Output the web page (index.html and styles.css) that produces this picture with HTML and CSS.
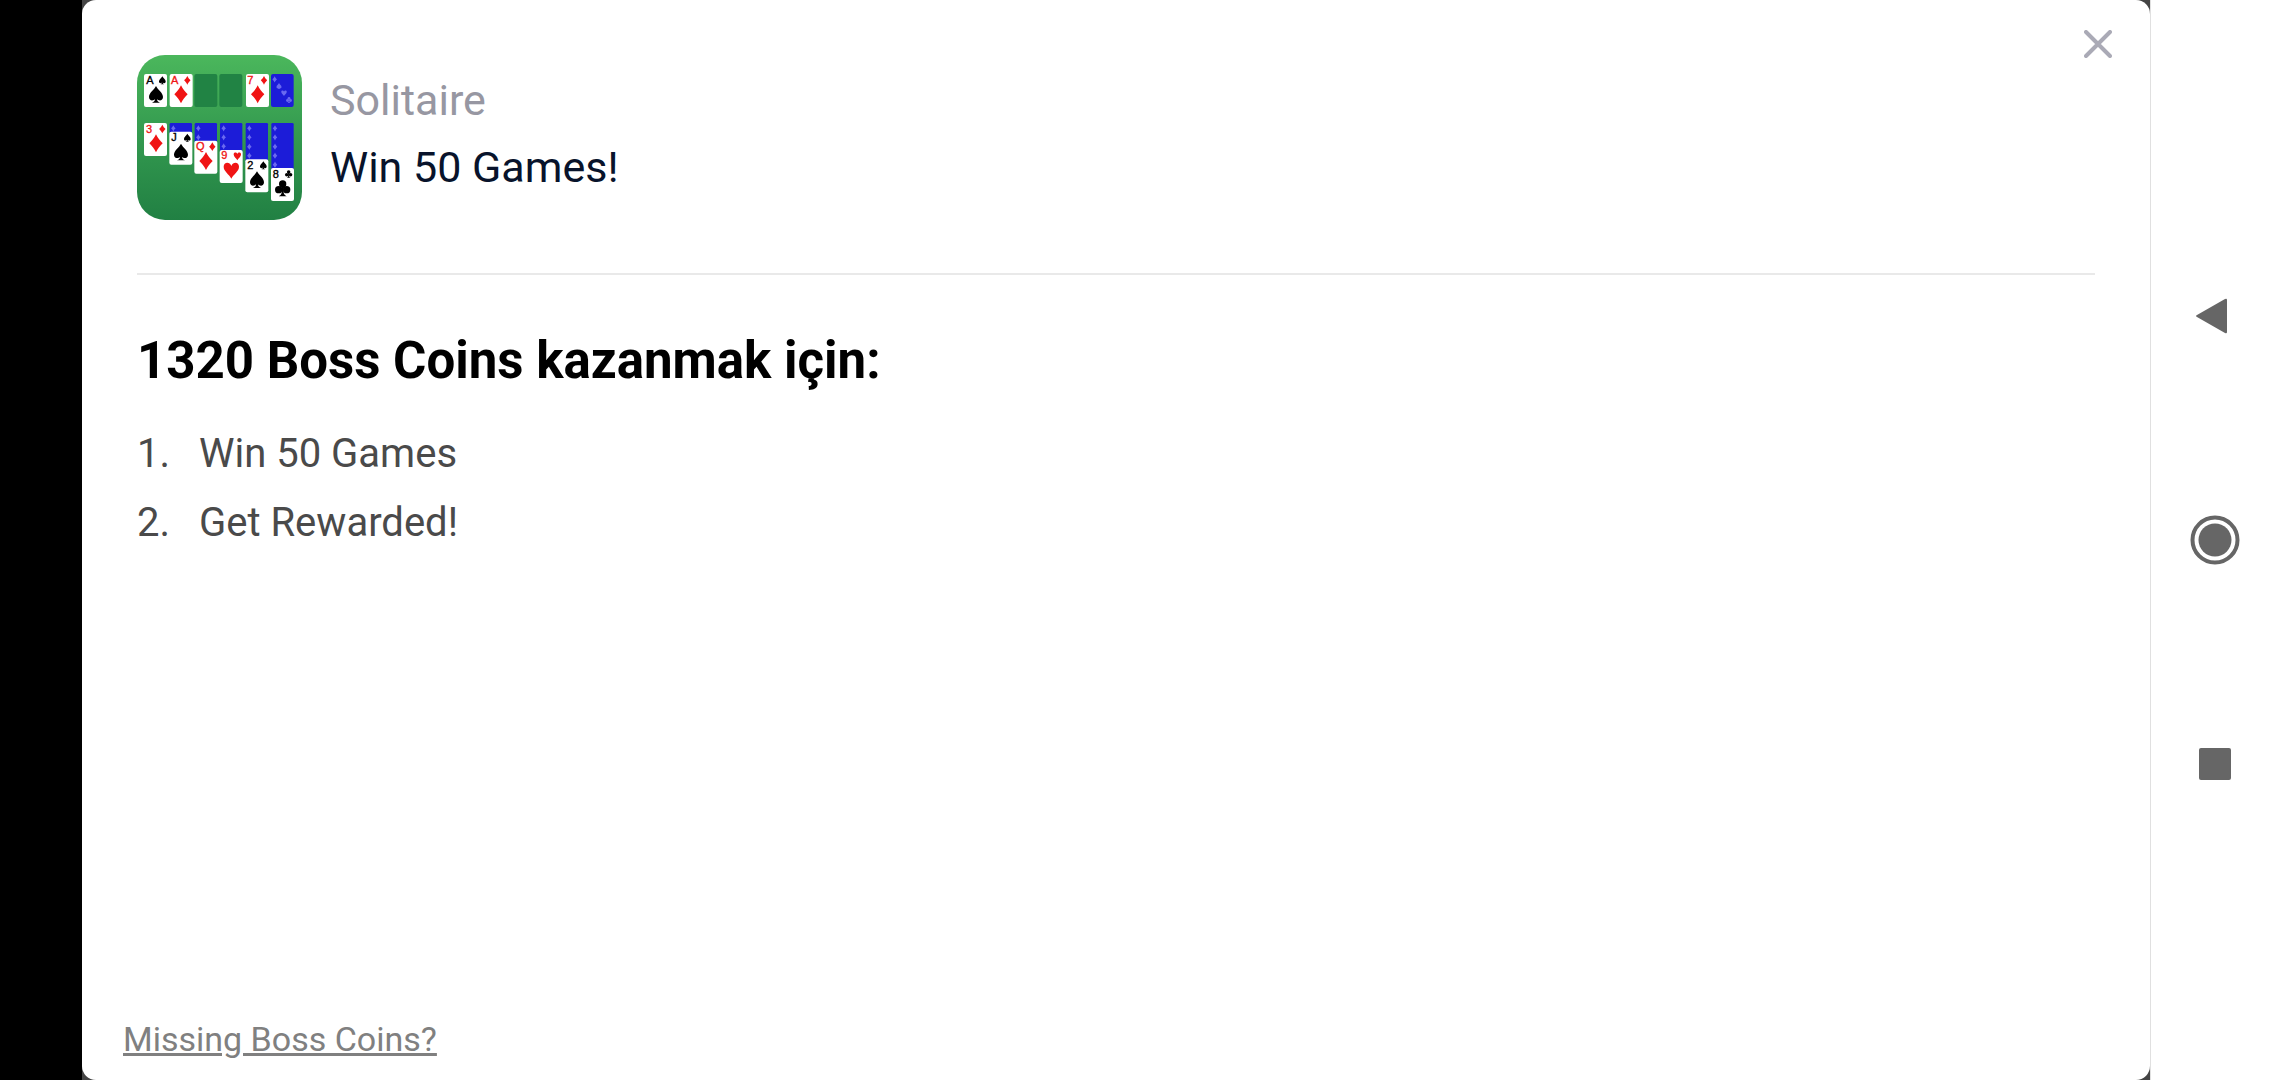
FILE: index.html
```
<!DOCTYPE html>
<html lang="tr">
<head>
    <meta charset="UTF-8">
    <meta name="viewport" content="width=device-width, initial-scale=1.0">
    <title>Solitaire - Win 50 Games!</title>
    <link rel="stylesheet" href="styles.css">
</head>
<body>
    <div class="stage">
        <main class="offer-card">
            <header class="offer-header">
                <svg class="app-icon" viewBox="22 22 495 495" role="img" aria-label="Solitaire">
                    <defs>
                        <linearGradient id="felt" x1="0" y1="0" x2="0" y2="1">
                            <stop offset="0" stop-color="#4bb75c"/>
                            <stop offset="0.5" stop-color="#33994f"/>
                            <stop offset="1" stop-color="#218043"/>
                        </linearGradient>
                        <path id="diamond" d="M0-27C6-15 12-8 20 0C12 8 6 15 0 27C-6 15-12 8-20 0C-12-8-6-15 0-27Z"/>
                        <path id="spade" d="M0-25C5-14 21-5 21 8C21 20 8 21 3 14C3 20 6 23 12 25H-12C-6 23-3 20-3 14C-8 21-21 20-21 8C-21-5-5-14 0-25Z"/>
                        <path id="heart" d="M0 26C-7 12-23 4-23-10C-23-24-5-26 0-12C5-26 23-24 23-10C23 4 7 12 0 26Z"/>
                        <g id="club">
                            <circle cy="-13" r="11"/>
                            <circle cx="-12" cy="4" r="11"/>
                            <circle cx="12" cy="4" r="11"/>
                            <path d="M-4-6H4L3 14Q5 21 12 24H-12Q-5 21-3 14Z"/>
                        </g>
                        <rect id="face" width="69" height="99" rx="6" fill="#fff"/>
                    </defs>
                    <rect x="22" y="22" width="495" height="495" fill="url(#felt)"/>

                    <!-- foundations, waste and stock -->
                    <use href="#face" x="43" y="79"/>
                    <text x="50" y="108">A</text>
                    <use href="#spade" transform="translate(98 98) scale(.48)"/>
                    <use href="#spade" transform="translate(79 140)"/>
                    <use href="#face" x="120" y="79"/>
                    <g class="red">
                        <text x="124" y="108">A</text>
                        <use href="#diamond" transform="translate(173 98) scale(.48)"/>
                        <use href="#diamond" transform="translate(154 140)"/>
                    </g>
                    <rect x="194" y="79" width="69" height="99" rx="6" fill="#218344"/>
                    <rect x="269" y="79" width="69" height="99" rx="6" fill="#218344"/>
                    <use href="#face" x="349" y="79"/>
                    <g class="red">
                        <text x="353" y="108">7</text>
                        <use href="#diamond" transform="translate(403 98) scale(.48)"/>
                        <use href="#diamond" transform="translate(384 140)"/>
                    </g>
                    <rect class="back" x="424" y="79" width="68" height="99" rx="6"/>
                    <g class="pips">
                        <use href="#diamond" transform="translate(435 95) scale(.35)"/>
                        <use href="#spade" transform="translate(448 115) scale(.36)"/>
                        <use href="#heart" transform="translate(463 136) scale(.36)"/>
                        <use href="#club" transform="translate(478 157) scale(.38)"/>
                    </g>

                    <!-- face-down stacks -->
                    <g class="back">
                        <rect x="120" y="226" width="67" height="40" rx="4"/>
                        <rect x="195" y="226" width="67" height="70" rx="4"/>
                        <rect x="271" y="226" width="67" height="100" rx="4"/>
                        <rect x="348" y="226" width="67" height="125" rx="4"/>
                        <rect x="425" y="226" width="67" height="150" rx="4"/>
                    </g>
                    <g class="pips">
                        <use href="#diamond" transform="translate(131 242) scale(.34)"/>
                        <use href="#diamond" transform="translate(206 242) scale(.34)"/>
                        <use href="#diamond" transform="translate(206 269) scale(.34)"/>
                        <use href="#diamond" transform="translate(282 242) scale(.34)"/>
                        <use href="#diamond" transform="translate(282 269) scale(.34)"/>
                        <use href="#diamond" transform="translate(282 296) scale(.34)"/>
                        <use href="#diamond" transform="translate(359 242) scale(.34)"/>
                        <use href="#diamond" transform="translate(359 269) scale(.34)"/>
                        <use href="#diamond" transform="translate(359 297) scale(.34)"/>
                        <use href="#diamond" transform="translate(359 324) scale(.34)"/>
                        <use href="#diamond" transform="translate(436 242) scale(.34)"/>
                        <use href="#diamond" transform="translate(436 269) scale(.34)"/>
                        <use href="#diamond" transform="translate(436 297) scale(.34)"/>
                        <use href="#diamond" transform="translate(436 324) scale(.34)"/>
                        <use href="#diamond" transform="translate(436 351) scale(.34)"/>
                    </g>

                    <!-- top card of each column -->
                    <use href="#face" x="43" y="226"/>
                    <g class="red">
                        <text x="49" y="255">3</text>
                        <use href="#diamond" transform="translate(98 244) scale(.48)"/>
                        <use href="#diamond" transform="translate(79 287)"/>
                    </g>
                    <use href="#face" x="119" y="252"/>
                    <text x="125" y="281">J</text>
                    <use href="#spade" transform="translate(173 270) scale(.48)"/>
                    <use href="#spade" transform="translate(154 313)"/>
                    <use href="#face" x="194" y="279"/>
                    <g class="red">
                        <text x="199" y="307">Q</text>
                        <use href="#diamond" transform="translate(248 297) scale(.48)"/>
                        <use href="#diamond" transform="translate(229 340)"/>
                    </g>
                    <use href="#face" x="270" y="307"/>
                    <g class="red">
                        <text x="275" y="335">9</text>
                        <use href="#heart" transform="translate(323 325) scale(.48)"/>
                        <use href="#heart" transform="translate(305 367)"/>
                    </g>
                    <use href="#face" x="347" y="335"/>
                    <text x="353" y="364">2</text>
                    <use href="#spade" transform="translate(401 353) scale(.48)"/>
                    <use href="#spade" transform="translate(382 396)"/>
                    <use href="#face" x="424" y="361"/>
                    <text x="429" y="390">8</text>
                    <use href="#club" transform="translate(477 379) scale(.48)"/>
                    <use href="#club" transform="translate(459 422)"/>
                </svg>
                <div class="offer-title">
                    <p class="app-name">Solitaire</p>
                    <h1 class="goal">Win 50 Games!</h1>
                </div>
                <button class="close-button" type="button" aria-label="Kapat">
                    <svg viewBox="0 0 28 28">
                        <path d="M2 2L26 26M26 2L2 26"/>
                    </svg>
                </button>
            </header>

            <section class="steps">
                <h2>1320 Boss Coins kazanmak için:</h2>
                <ol>
                    <li><span class="number">1.</span><span>Win 50 Games</span></li>
                    <li><span class="number">2.</span><span>Get Rewarded!</span></li>
                </ol>
            </section>

            <footer class="offer-footer">
                <a href="#">Missing Boss Coins?</a>
            </footer>
        </main>
    </div>

    <nav class="system-nav">
        <button type="button" aria-label="Back">
            <svg viewBox="0 0 50 50">
                <path d="M7 24L35 8Q37 7 37 9V41Q37 43 35 42L7 26Q5 25 7 24Z"/>
            </svg>
        </button>
        <button type="button" aria-label="Home">
            <svg viewBox="0 0 50 50">
                <circle class="ring" cx="25" cy="25" r="22.5"/>
                <circle cx="25" cy="25" r="16.5"/>
            </svg>
        </button>
        <button type="button" aria-label="Recent apps">
            <svg viewBox="0 0 50 50">
                <rect x="9" y="9" width="32" height="32" rx="2"/>
            </svg>
        </button>
    </nav>
</body>
</html>
```

FILE: styles.css
```
* {
    margin: 0;
    padding: 0;
    box-sizing: border-box;
}

body {
    font-family: Roboto, sans-serif;
    background: #fff;
    min-height: 100vh;
    display: flex;
}

button {
    background: none;
    border: none;
    cursor: pointer;
}

svg {
    display: block;
}

.stage {
    flex: 1;
    display: flex;
    background: #444;
    border-left: 82px solid #000;
}

.offer-card {
    flex: 1;
    display: flex;
    flex-direction: column;
    background: #fff;
    border-radius: 14px;
    padding: 0 55px;
}

.offer-header {
    position: relative;
    display: flex;
    align-items: flex-start;
    gap: 28px;
    padding: 55px 0 53px;
    border-bottom: 2px solid #e9e9e9;
}

.app-icon {
    width: 165px;
    height: 165px;
    border-radius: 28px;
}

.offer-title {
    padding-top: 12px;
}

.app-icon text {
    font-family: "Liberation Sans", sans-serif;
    font-size: 33px;
    stroke: #000;
    stroke-width: 1px;
}

.app-icon .red {
    fill: #f01414;
}

.app-icon .red text {
    stroke: #f01414;
}

.app-icon .back {
    fill: #1c1cd8;
}

.app-icon .pips {
    fill: #6a6af0;
}

.app-name,
.goal {
    font-size: 43px;
    font-weight: 400;
    line-height: 67px;
}

.app-name {
    color: #9797a2;
}

.goal {
    color: #08132b;
}

.close-button {
    position: absolute;
    top: 18px;
    right: -29px;
    padding: 12px;
}

.close-button svg {
    width: 28px;
    height: 28px;
    fill: none;
    stroke: #aaaab6;
    stroke-width: 4;
    stroke-linecap: round;
}

.steps {
    flex: 1;
    padding-top: 52px;
}

.steps h2 {
    font-size: 51px;
    font-weight: 700;
    line-height: 68px;
    color: #000;
    margin-bottom: 24px;
}

.steps ol {
    list-style: none;
}

.steps li {
    display: flex;
    font-size: 40px;
    line-height: 69px;
    color: #4a4a4a;
}

.number {
    width: 62px;
}

.offer-footer {
    display: flex;
    margin-left: -14px;
    padding-bottom: 19px;
}

.offer-footer a {
    font-size: 34px;
    line-height: 44px;
    color: #808080;
}

.system-nav {
    width: 130px;
    padding-right: 2px;
    border-left: 1px solid #e0e0e0;
    background: #fff;
    display: flex;
    flex-direction: column;
    align-items: center;
    justify-content: center;
    gap: 174px;
}

.system-nav svg {
    width: 50px;
    height: 50px;
    fill: #666;
}

.system-nav .ring {
    fill: none;
    stroke: #666;
    stroke-width: 4;
}
```
